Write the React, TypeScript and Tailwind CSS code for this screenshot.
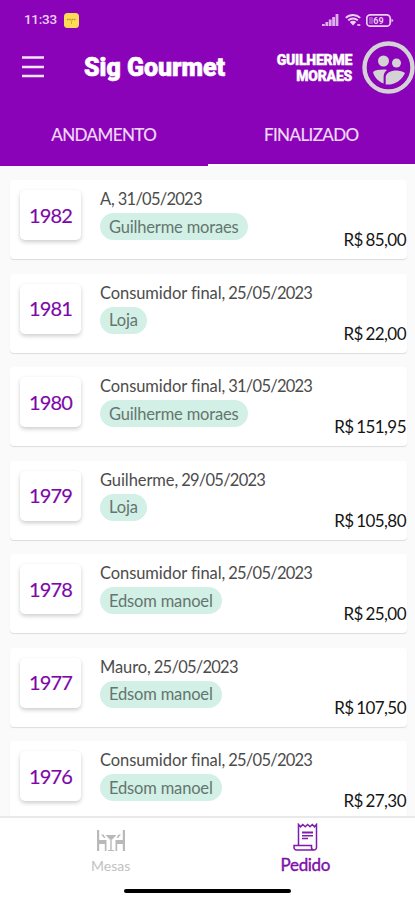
const orders = [
  { id: 1982, customer: "A", date: "31/05/2023", waiter: "Guilherme moraes", total: "85,00" },
  { id: 1981, customer: "Consumidor final", date: "25/05/2023", waiter: "Loja", total: "22,00" },
  { id: 1980, customer: "Consumidor final", date: "31/05/2023", waiter: "Guilherme moraes", total: "151,95" },
  { id: 1979, customer: "Guilherme", date: "29/05/2023", waiter: "Loja", total: "105,80" },
  { id: 1978, customer: "Consumidor final", date: "25/05/2023", waiter: "Edsom manoel", total: "25,00" },
  { id: 1977, customer: "Mauro", date: "25/05/2023", waiter: "Edsom manoel", total: "107,50" },
  { id: 1976, customer: "Consumidor final", date: "25/05/2023", waiter: "Edsom manoel", total: "27,30" },
];

function StatusBar() {
  return (
    <div className="flex h-10 items-center pr-[21px] pl-6 text-[#ead0f5]">
      <span className="text-[13.5px] leading-none font-medium tracking-[-0.3px]">11:33</span>
      <svg className="ml-[7px] size-[15px]" viewBox="0 0 15 15">
        <rect width="15" height="15" rx="3.5" fill="#fddc55" />
        <path d="M3 6.5h9" stroke="#b98a35" strokeWidth="1.6" strokeDasharray="1.5 .8" />
        <path d="M7.5 7.5v3.5" stroke="#d5ad42" />
      </svg>
      <svg className="ml-auto h-3 w-[17px]" viewBox="0 0 17 12" fill="currentColor" opacity=".85">
        <path d="M0 10h2.800v2H0zM3.400 8h2.800v4H3.400zM6.800 5.500h2.800V12H6.800zM10.200 3H13v9h-2.800zM13.600 0h2.800v12h-2.800z" />
      </svg>
      <svg className="ml-[6px] h-3 w-4" viewBox="0 0 16 12" fill="none" stroke="currentColor">
        <path d="M.8 3.900a10.500 10.500 0 0 1 14.400 0M3.200 6.400a7 7 0 0 1 9.600 0" strokeWidth="1.900" />
        <path d="M4.800 8a4.600 4.600 0 0 1 6.400 0L8 11.500z" fill="currentColor" stroke="none" />
        <path d="M12.300 11h3" strokeWidth="1.600" />
      </svg>
      <svg className="ml-[5px] h-[13px] w-7" viewBox="0 0 28 13">
        <rect x=".8" y=".8" width="23.400" height="11.400" rx="3.500" fill="none" stroke="currentColor" strokeWidth="1.700" />
        <rect x="3" y="3" width="4" height="7" rx="1" fill="currentColor" opacity=".35" />
        <path d="M25.500 4.500l2 2-2 2z" fill="currentColor" />
        <text x="12.500" y="9.700" textAnchor="middle" fontSize="9" fontWeight="700" fill="currentColor">
          69
        </text>
      </svg>
    </div>
  );
}

function UsersAvatar() {
  return (
    <svg className="ml-[10px] size-[53px] shrink-0" viewBox="0 0 53 53" fill="#d4d2d5">
      <circle cx="26.500" cy="26.500" r="24" fill="none" stroke="#d4d2d5" strokeWidth="4.400" />
      <circle cx="21.500" cy="20" r="5.500" />
      <circle cx="34.500" cy="22" r="4.500" />
      <path d="M21.500 28.500c1.500 0 2.600.1 3.500.4-2.400 1.800-3.400 4-3.400 7v6.500c-5.400-2-9.400-6.400-10.600-11.500 1.900-1.600 6.100-2.400 10.500-2.400z" />
      <path d="M34.500 29.500c-5.600 0-10.800 2.600-10.800 6.800v7.100c8.100 1 16-3.600 19.300-11.500-1.900-1.500-5.500-2.400-8.500-2.400z" />
    </svg>
  );
}

function Header() {
  return (
    <header className="flex h-[166px] shrink-0 flex-col bg-[#8b03b8] font-[Roboto,sans-serif] text-white">
      <StatusBar />
      <div className="flex h-[54px] items-center">
        <svg className="ml-[22px] h-[22px] w-[22px]" viewBox="0 0 22 22" stroke="#f6e6fb" strokeWidth="2.500">
          <path d="M0 1.500h22M0 11h22M0 20h22" />
        </svg>
        <h1 className="ml-10 pt-px text-[25px] leading-none font-black tracking-[-0.05px] whitespace-nowrap [-webkit-text-stroke:0.6px_white]">
          Sig Gourmet
        </h1>
        <p className="ml-auto pt-px text-right text-[14px] leading-4 font-black tracking-[-0.25px] [-webkit-text-stroke:0.4px_white]">
          GUILHERME
          <br />
          MORAES
        </p>
        <UsersAvatar />
      </div>
      <nav className="grid flex-1 grid-cols-2 font-[Lato,sans-serif] text-[17px] tracking-[-0.6px] text-[#f0daf7] [-webkit-text-stroke:0.2px_#f0daf7]">
        <div className="flex items-center justify-center pt-[9px]">ANDAMENTO</div>
        <div className="flex items-center justify-center border-b-2 border-white pt-[11px]">FINALIZADO</div>
      </nav>
    </header>
  );
}

function OrderCard({ order }: { order: (typeof orders)[number] }) {
  return (
    <article className="flex h-[79px] shrink-0 rounded-[4px] bg-white pt-[10px] pl-[10px] shadow-[0_1px_1px_rgba(0,0,0,0.12)]">
      <div className="flex h-[50px] w-[61px] shrink-0 items-center justify-center rounded-[5px] bg-white pb-px text-[20px] tracking-[-0.8px] text-[#7d08a8] shadow-[0_2px_4px_rgba(0,0,0,0.2)] [-webkit-text-stroke:0.15px_#7d08a8]">
        {order.id}
      </div>
      <div className="ml-[19px] flex flex-col items-start">
        <p className="flex h-[23px] text-[16.500px] leading-[18px] whitespace-nowrap text-[#4c4c4c]">
          <span className="tracking-[-0.08px]">{order.customer},</span>
          <span className="ml-[3px] tracking-[-0.75px]">{order.date}</span>
        </p>
        <span className="flex h-[27px] items-center rounded-full bg-[#d2f0e5] px-[9px] pt-px text-[16.500px] tracking-[-0.17px] whitespace-nowrap text-[#65756f]">
          {order.waiter}
        </span>
      </div>
      <span className="ml-auto self-end pr-px pb-[9px] text-[17px] leading-5 tracking-[-0.55px] [word-spacing:-1.300px] whitespace-nowrap text-[#151515]">
        R$ {order.total}
      </span>
    </article>
  );
}

function TablesIcon() {
  return (
    <svg className="h-[23px] w-[30px]" viewBox="0 0 30 23" fill="#b9b9b9">
      <path d="M1 1h2.200v10H10.500v11H8.800v-7H3.200v7H1zM29 1h-2.200v10H19.500v11h1.700v-7h5.600v7H29z" />
      <path d="M9.500 6h11l-4.300 4.500h-.5V21H18v1h-6v-1h2.300V10.500h-.5z" />
      <path d="M5 5.500h2.500L9.500 9H8zM25 5.500h-2.500L20.500 9H22z" />
    </svg>
  );
}

function ReceiptIcon() {
  return (
    <svg className="h-7 w-[25px]" viewBox="0 0 25 28" fill="none" stroke="#7e1cae" strokeWidth="1.500">
      <path d="M5.500 22V1.500l2 2.300 2.300-2.300 2.400 2.300 2.400-2.300L17 3.800l2.300-2.300 2.200 2.300 2-2.300V24.500a2.500 2.500 0 0 1-2.500 2.500H3.500A2.500 2.500 0 0 1 1 24.500V22.500h17.500v2a2.500 2.500 0 0 0 2.500 2.500" />
      <path d="M9 9.500h11" strokeWidth="2" />
      <path d="M9 12.800h11M9 15.500h6" />
    </svg>
  );
}

function BottomNav() {
  return (
    <footer className="flex h-[84px] shrink-0 flex-col border-t-2 border-[#e9e9e9] bg-white">
      <nav className="flex h-[71px] justify-between pt-[5px] pr-[85px] pl-[91px]">
        <div className="flex flex-col items-center pt-[6px] text-[14px] leading-[17px] text-[#c2c2c2]">
          <TablesIcon />
          <span className="mt-[5px]">Mesas</span>
        </div>
        <div className="flex flex-col items-center text-[17px] leading-5 tracking-[-0.35px] text-[#7e10a8] [-webkit-text-stroke:0.4px_#7e10a8]">
          <ReceiptIcon />
          <span className="mt-1">Pedido</span>
        </div>
      </nav>
      <div className="mx-auto h-1 w-[167px] rounded-full bg-black" />
    </footer>
  );
}

export default function App() {
  return (
    <div className="flex h-[900px] w-[415px] flex-col overflow-hidden bg-white font-[Lato,sans-serif]">
      <Header />
      <main className="flex min-h-0 flex-1 flex-col gap-[14.500px] overflow-hidden bg-[#fafafa] pt-[14px] pr-2 pl-[10px]">
        {orders.map((order) => (
          <OrderCard key={order.id} order={order} />
        ))}
      </main>
      <BottomNav />
    </div>
  );
}
